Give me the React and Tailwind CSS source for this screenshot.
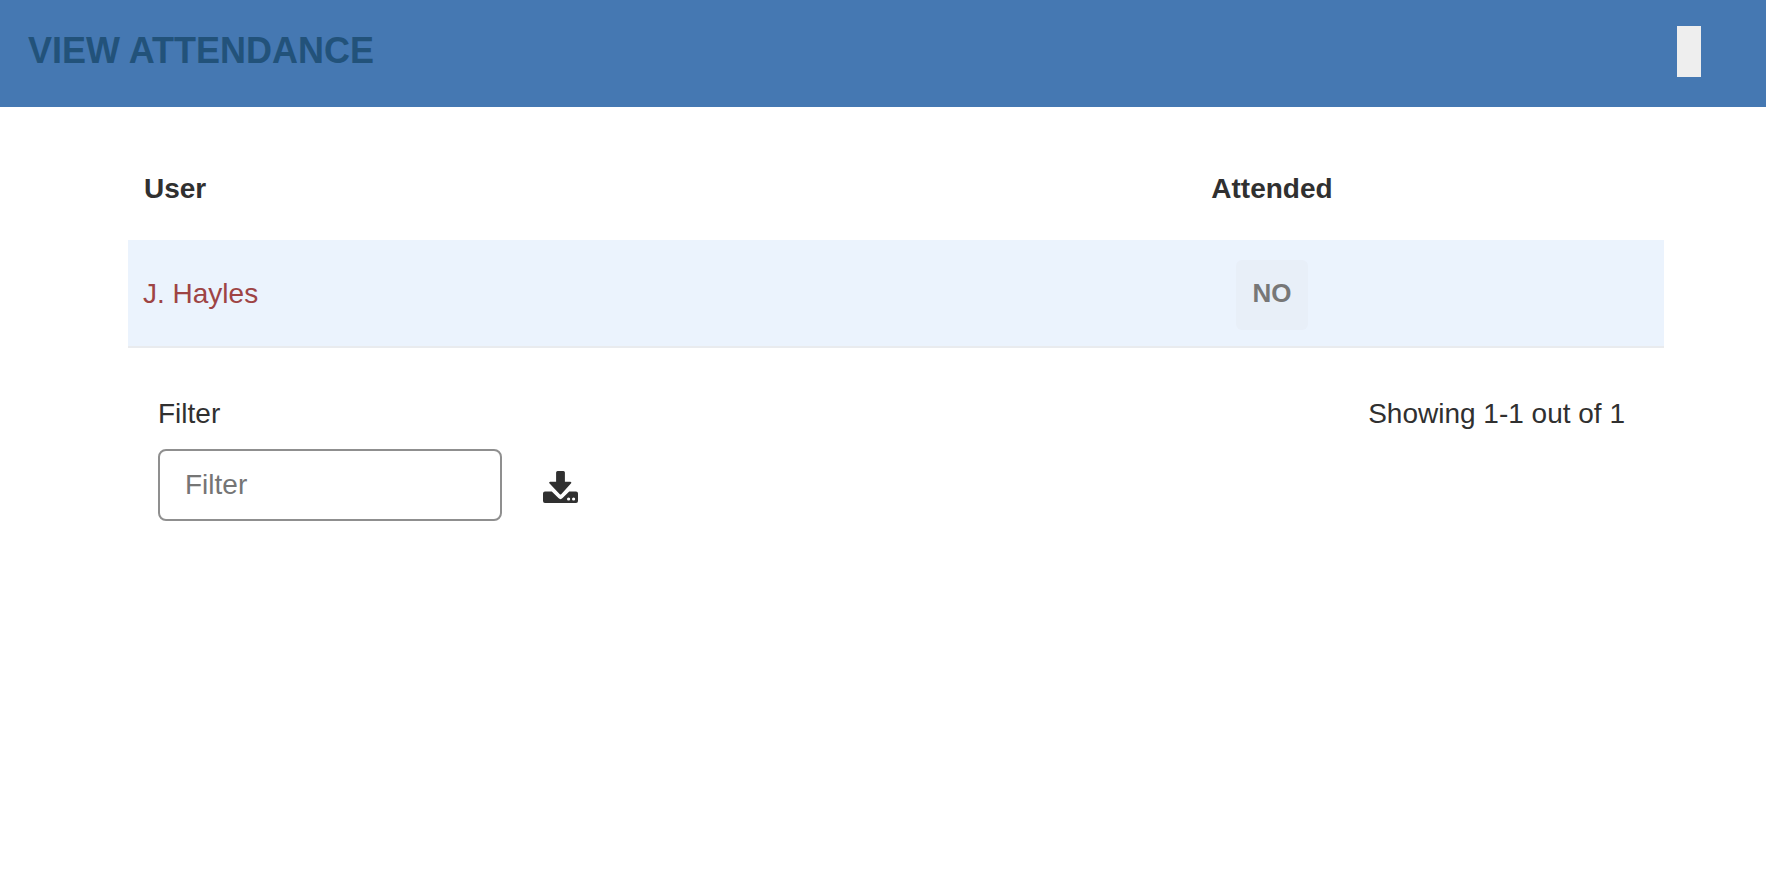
import React from "react";

const DownloadIcon = () => (
  <svg viewBox="0 0 35 32" className="w-[35px] h-[32px] mt-[4px] fill-[#303030]">
    <path d="M14.6 0h5.8a1.5 1.5 0 0 1 1.5 1.5v9.2h5.3a1 1 0 0 1 .7 1.8L18.2 23.2a1 1 0 0 1-1.4 0L6.6 12.5a1 1 0 0 1 .7-1.8h5.8V1.5A1.5 1.5 0 0 1 14.6 0z" />
    <path d="M2 20.5h6.8l6.6 6.6a3 3 0 0 0 4.2 0l6.6-6.6H33a2 2 0 0 1 2 2V30a2 2 0 0 1-2 2H2a2 2 0 0 1-2-2v-7.5a2 2 0 0 1 2-2z" />
    <circle cx="25.6" cy="28" r="1.6" fill="#ffffff" />
    <circle cx="30.6" cy="28" r="1.6" fill="#ffffff" />
  </svg>
);

const App = () => {
  return (
    <div className="min-h-screen bg-white font-['Liberation_Sans',Arial,sans-serif] text-[#303030]">
      {/* Header */}
      <header className="h-[107px] bg-[#4578b2] pl-[28px] pr-[65px] pb-[5px] flex items-center justify-between">
        <h1 className="text-[36px] font-bold text-[#22527a] leading-none">
          VIEW ATTENDANCE
        </h1>
        <button type="button" className="w-[24px] h-[51px] bg-[#eeeeee]" />
      </header>

      <main className="pl-[128px] pr-[102px]">
        {/* Table */}
        <div className="flex h-[133px] pt-[30px] items-center text-[28px] font-bold">
          <div className="w-[752px] pl-[16px]">User</div>
          <div className="flex-1 text-center">Attended</div>
        </div>
        <div className="flex h-[108px] items-center bg-[#ebf3fd] border-b-2 border-[#e9ebee] text-[28px]">
          <div className="w-[752px] pl-[15px] pt-[2px] text-[#9e4444]">J. Hayles</div>
          <div className="flex-1 flex justify-center">
            <span className="w-[72px] h-[70px] mt-[4px] pb-[4px] flex items-center justify-center rounded-md bg-[#e8eff8] text-[26px] font-bold text-[#777777]">
              NO
            </span>
          </div>
        </div>

        {/* Filter and paging */}
        <div className="flex justify-between pl-[30px] pr-[39px] pt-[50px]">
          <div>
            <label className="block text-[28px] leading-[32px]">Filter</label>
            <div className="flex items-center gap-[41px] mt-[19px]">
              <input
                type="text"
                placeholder="Filter"
                className="w-[344px] h-[72px] px-[25px] border-2 border-[#8f8f8f] rounded-lg text-[28px] outline-none placeholder:text-[#757575]"
              />
              <DownloadIcon />
            </div>
          </div>
          <div className="text-[28px] leading-[32px]">Showing 1-1 out of 1</div>
        </div>
      </main>
    </div>
  );
};

export default App;
